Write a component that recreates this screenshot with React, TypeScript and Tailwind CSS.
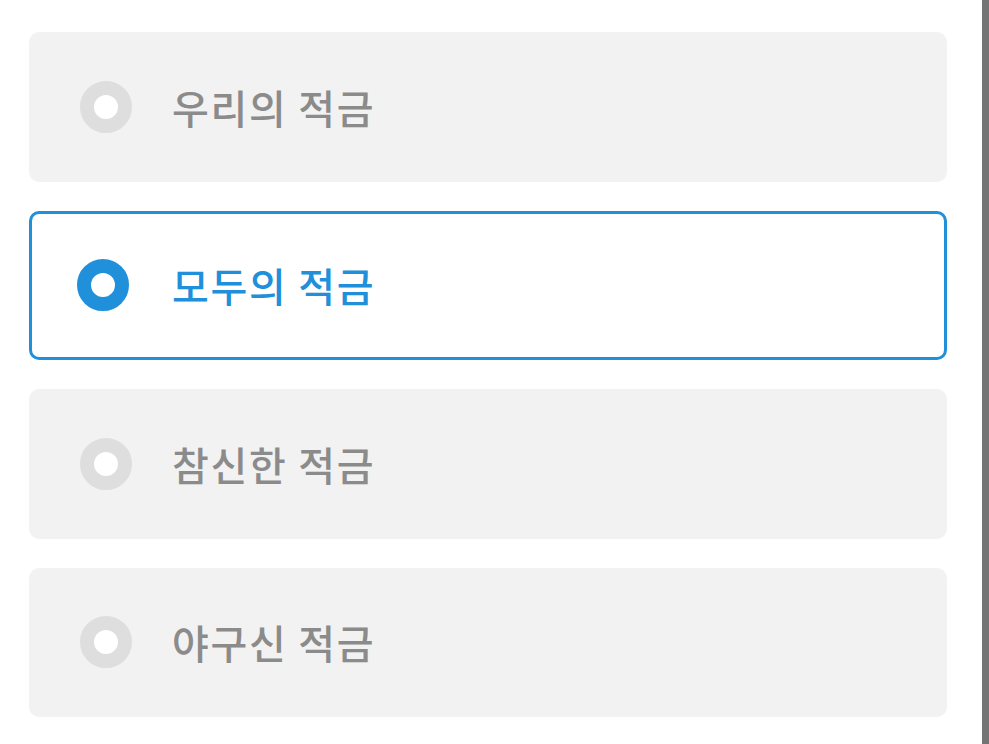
import { useState } from "react";

const OPTIONS = ["우리의 적금", "모두의 적금", "참신한 적금", "야구신 적금"];

export default function App() {
  const [selected, setSelected] = useState(1);

  return (
    <div className="flex h-screen w-full bg-white" style={{ fontFamily: '"Noto Sans CJK KR", "Noto Sans", sans-serif' }}>
      <div className="flex flex-1 flex-col gap-[29px] pl-[29px] pr-[35px] pt-[32px]">
        {OPTIONS.map((label, i) => (
          <Option key={label} label={label} active={i === selected} onClick={() => setSelected(i)} />
        ))}
      </div>
      <div className="h-full w-[7px] bg-[#747474]" />
    </div>
  );
}

function Option({ label, active, onClick }: { label: string; active: boolean; onClick: () => void }) {
  return (
    <button
      onClick={onClick}
      className={`flex h-[149.5px] w-full items-center rounded-[10px] text-left ${
        active ? "border-[3px] border-[#2190da] bg-white pl-[45px]" : "bg-[#f2f2f2] pl-[51px]"
      }`}
    >
      <span
        className={`h-[52px] w-[52px] shrink-0 rounded-full border-[14px] bg-white ${
          active ? "border-[#2190da]" : "border-[#dedede]"
        }`}
      />
      <span
        className={`text-[40px] font-medium leading-none tracking-[1.7px] ${
          active ? "ml-[43px] text-[#2190da]" : "ml-[40px] text-[#8b8b8b]"
        }`}
      >
        {label}
      </span>
    </button>
  );
}
